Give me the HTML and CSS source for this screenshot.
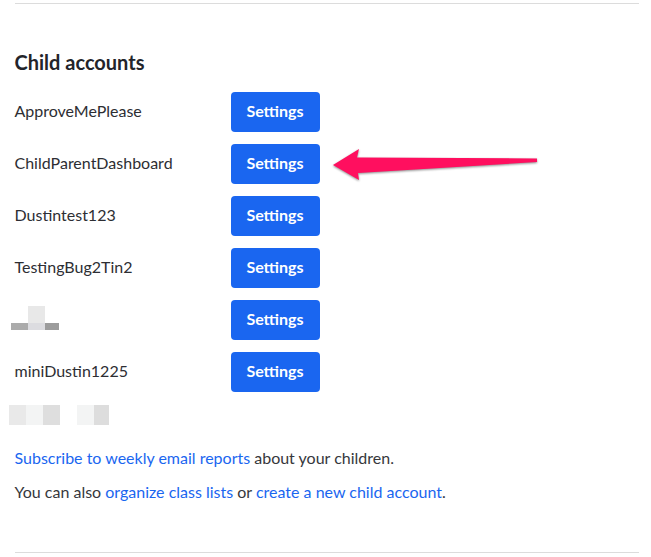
FILE: index.html
```html
<!DOCTYPE html>
<html lang="en">
<head>
<meta charset="utf-8">
<title>Child accounts</title>
<link rel="stylesheet" href="styles.css">
</head>
<body>
<main class="page">
  <hr class="rule">
  <h2 class="title">Child accounts</h2>
  <ul class="accounts">
    <li class="account"><span class="name">ApproveMePlease</span><a class="btn">Settings</a></li>
    <li class="account"><span class="name">ChildParentDashboard</span><a class="btn">Settings</a></li>
    <li class="account"><span class="name">Dustintest123</span><a class="btn">Settings</a></li>
    <li class="account"><span class="name">TestingBug2Tin2</span><a class="btn">Settings</a></li>
    <li class="account">
      <span class="name">
        <span class="mosaic-a">
          <i class="m-top"></i><i class="m-l"></i><i class="m-c"></i><i class="m-r"></i>
        </span>
      </span>
      <a class="btn">Settings</a>
    </li>
    <li class="account"><span class="name">miniDustin1225</span><a class="btn">Settings</a></li>
  </ul>
  <div class="mosaic-b">
    <i class="b1"></i><i class="b2"></i><i class="b3"></i><i class="gap"></i><i class="b2"></i><i class="b4"></i>
  </div>
  <p class="note first"><a>Subscribe to weekly email reports</a> about your children.</p>
  <p class="note">You can also <a>organize class lists</a> or <a>create a new child account</a>.</p>
  <hr class="rule bottom">
  <svg class="arrow" width="230" height="60" viewBox="0 0 230 60" aria-hidden="true">
    <path d="M13 35 L39 19 L37 27.5 L217 28.5 L217 32 L38 43 L39 50 Z" fill="#ff0f5f"/>
  </svg>
</main>
</body>
</html>
```
FILE: styles.css
```css
* { box-sizing: border-box; }
html, body { margin: 0; padding: 0; background: #fff; }
body { font-family: Lato, "Liberation Sans", sans-serif; color: #2d2e33; overflow: hidden; font-variant-ligatures: common-ligatures; }
.page { position: relative; width: 651px; height: 557px; padding: 3px 12px 0 14.5px; }
.rule { margin: 0 0 0 .5px; border: 0; border-top: 1px solid #dcdcdc; height: 0; }
.title { margin: 46px 0 0; font-size: 20px; line-height: 24px; font-weight: 700; color: #23242a; }
.accounts { list-style: none; margin: 18px 0 0; padding: 0; display: flex; flex-direction: column; gap: 12px; }
.account { display: flex; align-items: center; height: 40px; }
.name { width: 216.5px; font-size: 16px; line-height: 20px; padding-bottom: 2px; box-sizing: content-box; color: #2d2e33; }
.btn { display: flex; align-items: center; justify-content: center; width: 89px; height: 40px; padding: 0 1px 4px 0; border-radius: 4px; background: #1a66f0; color: #fff; font-size: 16px; font-weight: 700; }
.mosaic-a { display: grid; grid-template-columns: 17px 17px 14px; grid-template-rows: 17px 7px; width: 48px; margin: -3px 0 -1px -3.5px; }
.mosaic-a i { display: block; }
.m-top { grid-column: 2; grid-row: 1; background: #e8e8e8; }
.m-l { grid-column: 1; grid-row: 2; background: #ababab; }
.m-c { grid-column: 2; grid-row: 2; background: #dcdce0; }
.m-r { grid-column: 3; grid-row: 2; background: #9c9c9c; }
.mosaic-b { display: flex; height: 20px; margin: 13px 0 0 -5.5px; }
.mosaic-b i { display: block; width: 17px; height: 100%; }
.mosaic-b .b1 { background: #e9e9e9; }
.mosaic-b .b2 { background: #f3f4f4; }
.mosaic-b .b3 { background: #dedede; }
.mosaic-b .gap { background: transparent; }
.mosaic-b .b4 { background: #dddddd; width: 15px; }
.note { margin: 14px 0 0; font-size: 16px; line-height: 20px; color: #36373c; }
.note.first { margin-top: 23px; }
.note a { color: #1a66f0; }
.bottom { margin-top: 50px; }
.arrow { position: absolute; left: 320px; top: 130px; filter: drop-shadow(0 1.5px 1px rgba(0,0,0,.45)); }
```
